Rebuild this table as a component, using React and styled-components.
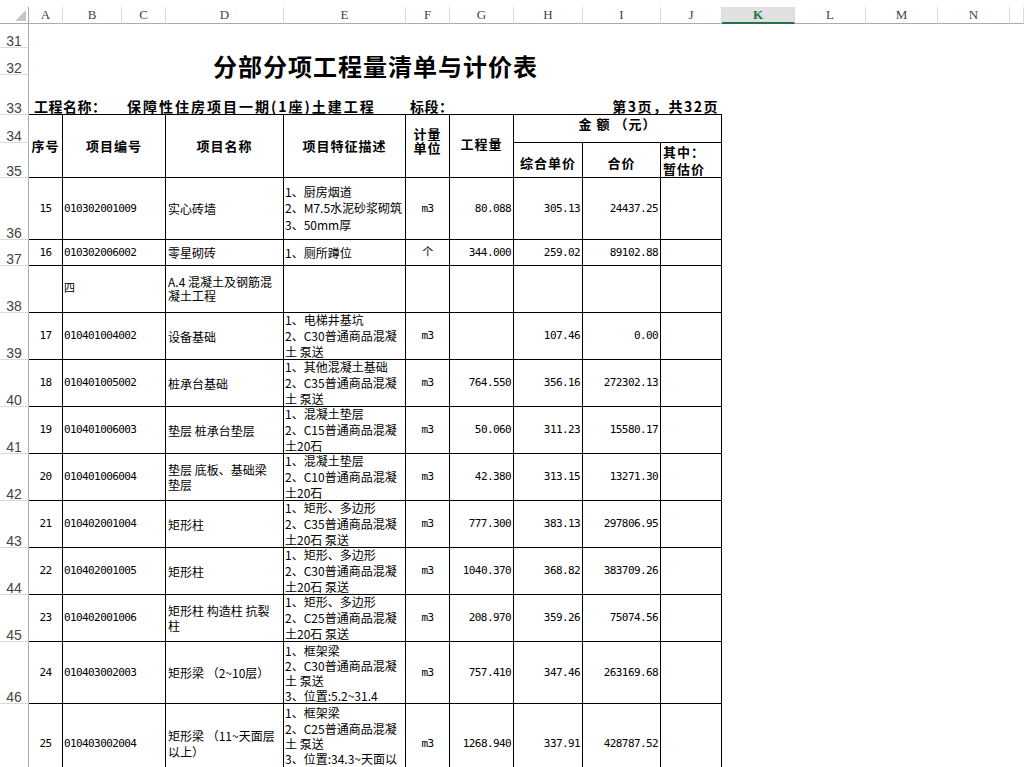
import React from 'react';
import styled, { createGlobalStyle, css } from 'styled-components';

const GlobalStyle = createGlobalStyle`
  html, body { margin: 0; padding: 0; background: #fff; }
  body {
    overflow: hidden;
    font-family: "Noto Sans CJK SC", "Liberation Sans", sans-serif;
    color: #000;
  }
`;

const COL_WIDTHS = [29, 34, 59, 44, 118, 122, 44, 64, 69, 78, 61, 73, 71, 72, 72];
const ROW_HEIGHTS = [17, 24, 27, 40, 28, 35, 62, 26, 47, 47, 47, 47, 47, 47, 47, 47, 62, 80];
const LETTERS = ['A', 'B', 'C', 'D', 'E', 'F', 'G', 'H', 'I', 'J', 'K', 'L', 'M', 'N', ''];

const Page = styled.div`
  width: 1024px;
  height: 767px;
  overflow: hidden;
  padding-top: 7px;
  box-sizing: border-box;
  background: #fff;
`;

const Sheet = styled.div`
  display: grid;
  grid-template-columns: ${COL_WIDTHS.map((w) => `${w}px`).join(' ')} 1fr;
  grid-template-rows: ${ROW_HEIGHTS.map((h) => `${h}px`).join(' ')};
`;

const ColHead = styled.div`
  box-sizing: border-box;
  display: flex;
  align-items: center;
  justify-content: center;
  border-right: 1px solid #dadada;
  border-bottom: 1px solid #ababab;
  font-family: "Liberation Serif", "DejaVu Serif", serif;
  font-size: 13px;
  color: #444;
  ${(p) =>
    p.$active &&
    css`
      background: #e0e0e0;
      color: #217346;
      font-weight: 700;
      border-bottom: 2px solid #217346;
    `}
`;

const Corner = styled(ColHead)`
  align-items: flex-end;
  justify-content: flex-end;
  padding: 0 2px 2px 0;
  border-right-color: #ababab;
`;

const Triangle = styled.span`
  width: 0;
  height: 0;
  border-left: 11px solid transparent;
  border-bottom: 11px solid #c6c6c6;
`;

const RowHead = styled.div`
  grid-column: 1;
  box-sizing: border-box;
  display: flex;
  align-items: flex-end;
  justify-content: center;
  overflow: hidden;
  border-right: 1px solid #ababab;
  border-bottom: 1px solid #dadada;
  font-family: "Liberation Sans", "DejaVu Sans", sans-serif;
  font-size: 14px;
  line-height: 14px;
  color: #444;
`;

const RowNum = styled.span`
  margin-bottom: -1px;
`;

const Blank = styled.div``;

const TitleCell = styled.div`
  grid-column: span 10;
  display: flex;
  align-items: flex-end;
  justify-content: center;
  font-size: 24px;
  line-height: 24px;
  font-weight: 700;
  letter-spacing: 1px;
  white-space: nowrap;
`;

const TitleText = styled.span`
  margin-bottom: -3px;
`;

const InfoCell = styled.div`
  box-sizing: border-box;
  grid-column: span ${(p) => p.$span};
  display: flex;
  align-items: flex-end;
  justify-content: ${(p) => (p.$right ? 'flex-end' : 'flex-start')};
  padding: 0 ${(p) => p.$pr || 0}px 0 ${(p) => p.$pl || 0}px;
  border-bottom: 1px solid #000;
  font-size: 14px;
  line-height: 16px;
  font-weight: 700;
  letter-spacing: ${(p) => p.$ls || 0}px;
  white-space: nowrap;
`;

const Cell = styled.div`
  box-sizing: border-box;
  min-width: 0;
  min-height: 0;
  grid-column: span ${(p) => p.$span || 1};
  grid-row: span ${(p) => p.$rows || 1};
  display: flex;
  flex-direction: column;
  justify-content: center;
  overflow: hidden;
  border-right: 1px solid #000;
  border-bottom: 1px solid #000;
  color: #000;
`;

const HeadCell = styled(Cell)`
  align-items: ${(p) => (p.$left ? 'flex-start' : 'center')};
  padding: ${(p) => p.$pt || 0}px 0 ${(p) => p.$pb || 0}px ${(p) => (p.$left ? 2 : 0)}px;
  font-size: 13px;
  font-weight: 700;
  letter-spacing: 1px;
  line-height: ${(p) => p.$lh || 16}px;
`;

const MonoCell = styled(Cell)`
  align-items: ${(p) => (p.$align === 'right' ? 'flex-end' : p.$align === 'center' ? 'center' : 'flex-start')};
  padding: 0 ${(p) => (p.$align === 'right' ? 2 : 0)}px 0 ${(p) => (p.$align === 'left' ? 1 : 0)}px;
  font-family: "DejaVu Sans Mono", "Noto Sans CJK SC", monospace;
  font-size: 11px;
  letter-spacing: -0.6px;
  line-height: 14px;
  white-space: nowrap;
`;

const TextCell = styled(Cell)`
  align-items: flex-start;
  padding-left: ${(p) => p.$pl || 2}px;
  font-size: 12px;
  line-height: ${(p) => p.$lh || 15}px;
`;

const Line = styled.span`
  display: block;
  white-space: nowrap;
  flex-shrink: 0;
`;

const rows = [
  { n: 36, idx: '15', code: '010302001009', name: ['实心砖墙'], desc: ['1、厨房烟道', '2、M7.5水泥砂浆砌筑', '3、50mm厚'], descLh: 16.5, unit: 'm3', qty: '80.088', price: '305.13', total: '24437.25' },
  { n: 37, idx: '16', code: '010302006002', name: ['零星砌砖'], desc: ['1、厕所蹲位'], unit: '个', qty: '344.000', price: '259.02', total: '89102.88' },
  { n: 38, idx: '', code: '四', name: ['A.4 混凝土及钢筋混', '凝土工程'], nameLh: 14, desc: [], unit: '', qty: '', price: '', total: '' },
  { n: 39, idx: '17', code: '010401004002', name: ['设备基础'], desc: ['1、电梯井基坑', '2、C30普通商品混凝', '土 泵送'], unit: 'm3', qty: '', price: '107.46', total: '0.00' },
  { n: 40, idx: '18', code: '010401005002', name: ['桩承台基础'], desc: ['1、其他混凝土基础', '2、C35普通商品混凝', '土 泵送'], unit: 'm3', qty: '764.550', price: '356.16', total: '272302.13' },
  { n: 41, idx: '19', code: '010401006003', name: ['垫层 桩承台垫层'], desc: ['1、混凝土垫层', '2、C15普通商品混凝', '土20石'], unit: 'm3', qty: '50.060', price: '311.23', total: '15580.17' },
  { n: 42, idx: '20', code: '010401006004', name: ['垫层 底板、基础梁', '垫层'], desc: ['1、混凝土垫层', '2、C10普通商品混凝', '土20石'], unit: 'm3', qty: '42.380', price: '313.15', total: '13271.30' },
  { n: 43, idx: '21', code: '010402001004', name: ['矩形柱'], desc: ['1、矩形、多边形', '2、C35普通商品混凝', '土20石 泵送'], unit: 'm3', qty: '777.300', price: '383.13', total: '297806.95' },
  { n: 44, idx: '22', code: '010402001005', name: ['矩形柱'], desc: ['1、矩形、多边形', '2、C30普通商品混凝', '土20石 泵送'], unit: 'm3', qty: '1040.370', price: '368.82', total: '383709.26' },
  { n: 45, idx: '23', code: '010402001006', name: ['矩形柱 构造柱 抗裂', '柱'], desc: ['1、矩形、多边形', '2、C25普通商品混凝', '土20石 泵送'], unit: 'm3', qty: '208.970', price: '359.26', total: '75074.56' },
  { n: 46, idx: '24', code: '010403002003', name: ['矩形梁 （2~10层）'], desc: ['1、框架梁', '2、C30普通商品混凝', '土 泵送', '3、位置:5.2~31.4'], descLh: 15, unit: 'm3', qty: '757.410', price: '347.46', total: '263169.68' },
  { n: 47, idx: '25', code: '010403002004', name: ['矩形梁 （11~天面层', '以上）'], nameLh: 16, desc: ['1、框架梁', '2、C25普通商品混凝', '土 泵送', '3、位置:34.3~天面以', '上'], descLh: 15.3, unit: 'm3', qty: '1268.940', price: '337.91', total: '428787.52', hideNum: true },
];

const Lines = ({ items }) => items.map((t, i) => <Line key={i}>{t}</Line>);

const DataRow = ({ r }) => (
  <>
    <RowHead>{!r.hideNum && <RowNum>{r.n}</RowNum>}</RowHead>
    <MonoCell $align="center">{r.idx}</MonoCell>
    <MonoCell $span={2} $align="left">{r.code}</MonoCell>
    <TextCell $lh={r.nameLh}>
      <Lines items={r.name} />
    </TextCell>
    <TextCell $pl={1} $lh={r.descLh || 16}>
      <Lines items={r.desc} />
    </TextCell>
    <MonoCell $align="center">{r.unit}</MonoCell>
    <MonoCell $align="right">{r.qty}</MonoCell>
    <MonoCell $align="right">{r.price}</MonoCell>
    <MonoCell $align="right">{r.total}</MonoCell>
    <Cell />
  </>
);

export default function App() {
  return (
    <Page>
      <GlobalStyle />
      <Sheet>
        <Corner>
          <Triangle />
        </Corner>
        {LETTERS.map((l, i) => (
          <ColHead key={i} $active={l === 'K'}>
            {l}
          </ColHead>
        ))}

        <RowHead>
          <RowNum>31</RowNum>
        </RowHead>

        <RowHead>
          <RowNum>32</RowNum>
        </RowHead>
        <TitleCell>
          <TitleText>分部分项工程量清单与计价表</TitleText>
        </TitleCell>

        <RowHead>
          <RowNum>33</RowNum>
        </RowHead>
        <InfoCell $span={2} $pl={5} $ls={0.5}>工程名称：</InfoCell>
        <InfoCell $span={3} $pl={5} $ls={2}>保障性住房项目一期(1座)土建工程</InfoCell>
        <InfoCell $span={2} $pl={4} $ls={0.5}>标段：</InfoCell>
        <InfoCell $span={3} $pr={3} $ls={1.5} $right>第3页，共32页</InfoCell>

        <RowHead>
          <RowNum>34</RowNum>
        </RowHead>
        <HeadCell $rows={2}>序号</HeadCell>
        <HeadCell $rows={2} $span={2}>项目编号</HeadCell>
        <HeadCell $rows={2}>项目名称</HeadCell>
        <HeadCell $rows={2}>项目特征描述</HeadCell>
        <HeadCell $rows={2} $lh={14} $pb={11}>
          <Lines items={['计量', '单位']} />
        </HeadCell>
        <HeadCell $rows={2} $pb={4}>工程量</HeadCell>
        <HeadCell $span={3} $pb={10}>金 额 （元）</HeadCell>

        <RowHead>
          <RowNum>35</RowNum>
        </RowHead>
        <HeadCell $pt={6}>综合单价</HeadCell>
        <HeadCell $pt={6}>合价</HeadCell>
        <HeadCell $left $lh={17}>
          <Lines items={['其中：', '暂估价']} />
        </HeadCell>

        {rows.map((r) => (
          <DataRow key={r.n} r={r} />
        ))}
        <Blank />
      </Sheet>
    </Page>
  );
}
